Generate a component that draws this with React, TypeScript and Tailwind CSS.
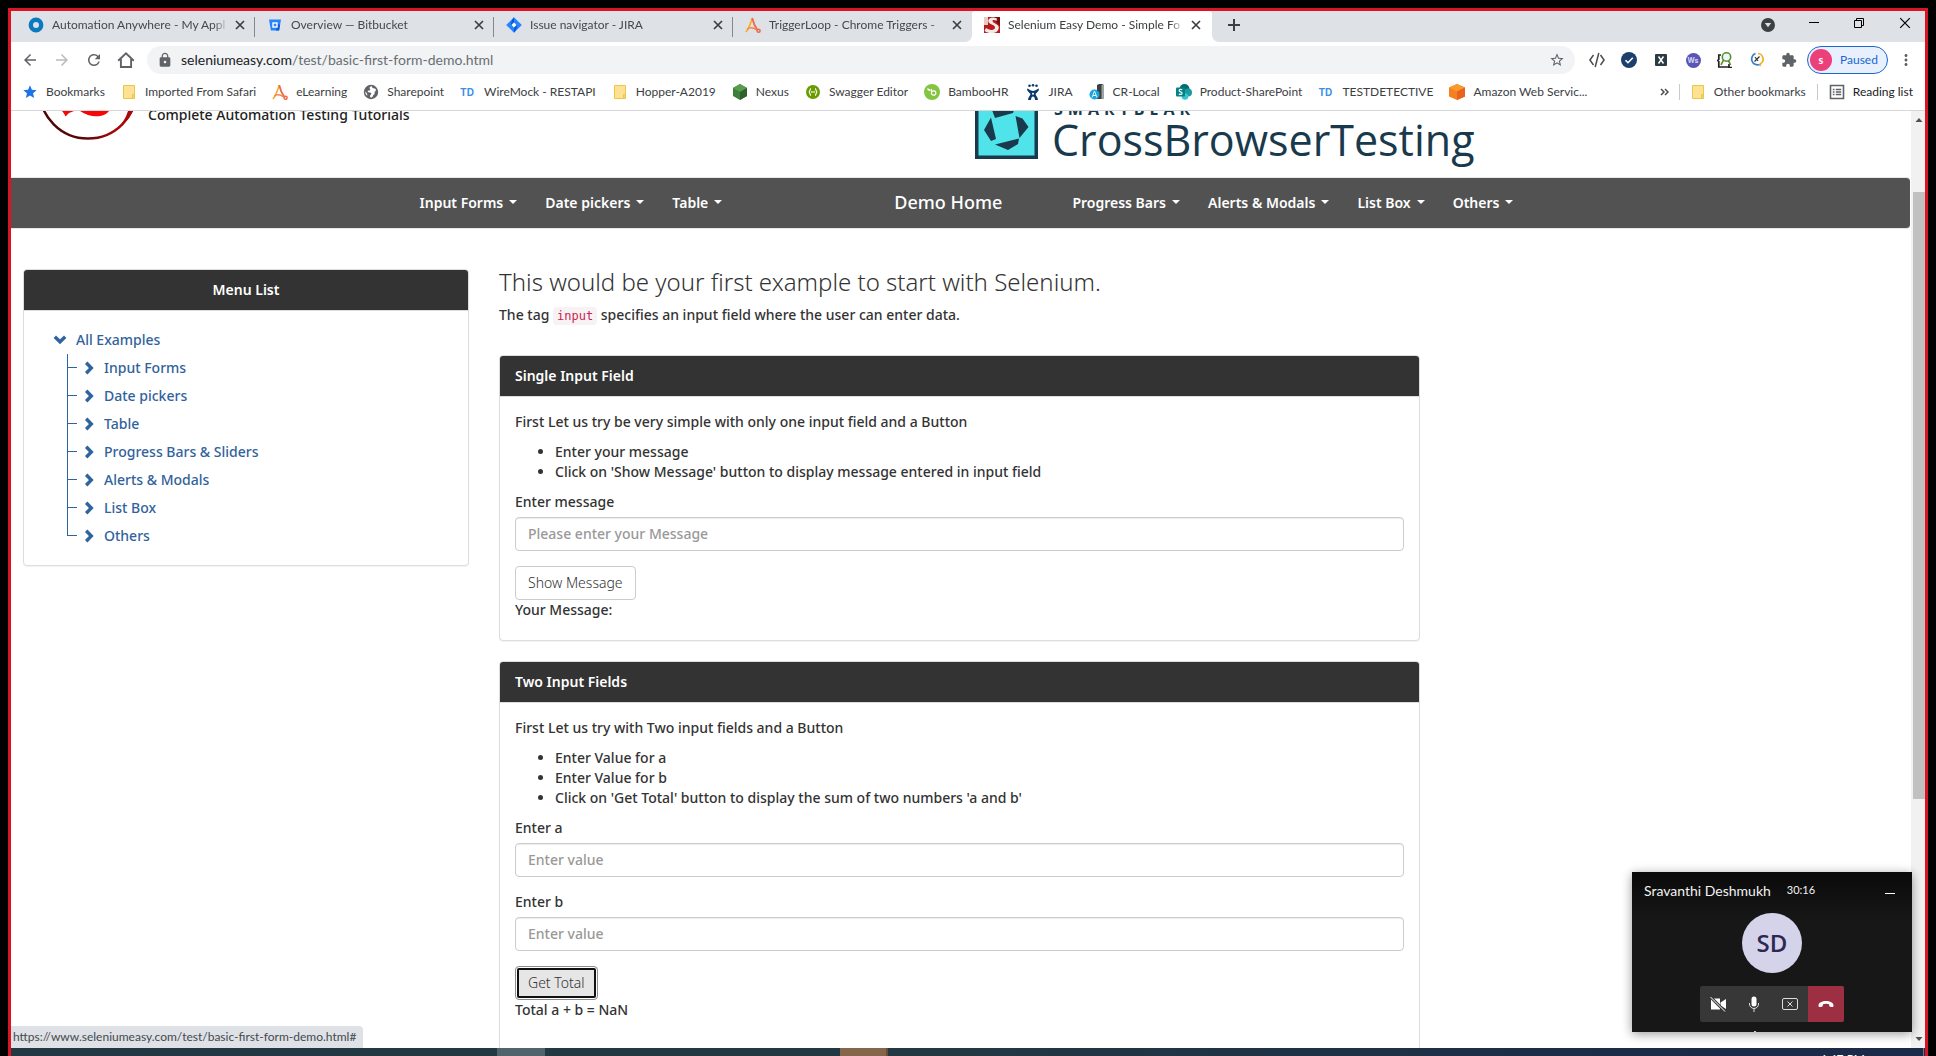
import React, { useState } from 'react';
import type { ReactNode } from 'react';
import { MdArrowBack, MdArrowForward, MdRefresh, MdLock, MdStarBorder, MdStar, MdExtension, MdMoreVert } from 'react-icons/md';

/* ---------- small drawings ---------- */

const Cross = ({ className }: { className: string }) => (
  <svg viewBox="0 0 10 10" className={className} fill="none" stroke="currentColor">
    <path d="M1 1 L9 9 M9 1 L1 9" />
  </svg>
);

const RingIcon = () => (
  <svg viewBox="0 0 16 16" className="size-4 shrink-0"><circle cx="8" cy="8" r="5.2" fill="none" stroke="#0a7ac0" strokeWidth="4.4" /></svg>
);

const BucketIcon = () => (
  <svg viewBox="0 0 16 16" className="size-4 shrink-0">
    <path d="M2 2.5h12l-1.9 11H3.9z" fill="#2684ff" />
    <path d="M9 13.5h3.1l1-6H10z" fill="#0f5fd8" />
    <rect x="6" y="6" width="4" height="4" fill="#2684ff" stroke="#fff" strokeWidth="1.4" />
  </svg>
);

const DiamondIcon = () => (
  <svg viewBox="0 0 16 16" className="size-4 shrink-0">
    <path d="M8 .2 15.8 8 8 15.8.2 8z" fill="#2684ff" />
    <path d="M8 .2v5L4.6 8.2 6 3z M8 15.8v-5l3.4-3L10 13z" fill="#0a57cf" />
    <path d="M8 5.6 10.4 8 8 10.4 5.6 8z" fill="#fff" />
  </svg>
);

const CompassAIcon = () => (
  <svg viewBox="0 0 16 16" className="size-4 shrink-0" fill="none" strokeWidth="1.5">
    <path d="M.8 15 C3.5 12.5 6 5 7.2 1.2" stroke="#f7a823" />
    <path d="M7.2 1 C8 5 11 11 12.5 13.2" stroke="#ee6a4a" strokeWidth="1.8" />
    <path d="M2 12.5 C5 9.5 8 10.5 12 13" stroke="#f4874b" />
    <circle cx="13.6" cy="13.8" r="1.5" stroke="#ee6a4a" />
  </svg>
);

const SeleniumIcon = () => (
  <svg viewBox="0 0 16 16" className="size-4 shrink-0">
    <rect width="16" height="16" fill="#b81a1a" />
    <path d="M9 0h7v9L13 6z" fill="#7c0d0d" />
    <path d="M0 0h4v8H0z" fill="#e8c9c4" />
    <path d="M13 1.5 C8 -1 3 1.5 4.5 5 C6 8 11 7.500 11 10.500 C11 13.500 6 13.800 2 11 L0.500 14 C5 17.500 14 17 14.800 11 C15 6.500 8.500 6.500 8.500 4 C8.500 2.500 11 2.800 12.500 4z" fill="#f3e9e6" />
  </svg>
);

const FolderIcon = () => (
  <svg viewBox="0 0 16 16" className="size-4 shrink-0">
    <path d="M2.500 1.500h11v13h-11z" fill="#fde293" stroke="#ecc646" />
    <path d="M11.500 10.500h1.500v4h-1.500z" fill="#fde293" stroke="#ecc646" />
  </svg>
);

const GlobeIcon = () => (
  <svg viewBox="0 0 16 16" className="size-4 shrink-0">
    <circle cx="8" cy="8" r="7.2" fill="#5f6368" />
    <path d="M9 2.300 C6.500 2.500 6 4 7 5 C8 6 6.500 6.500 5.500 6.500 C4 6.500 4.500 8.500 6.500 8.500 C9 8.500 8.500 10 7.500 11 C6.500 12 7 13.800 8.500 13.600 C10 13 9.500 11.500 11 10.500 C12.500 9.500 11 8 12 7.500 C13.500 7 13 4.500 11.500 4.500 C10 4.500 9 4 9 2.300z M2.200 7.500 C3.500 8.500 4.500 9.500 4.300 11.800 C3 10.800 2.200 9.500 2.200 7.500z" fill="#fff" />
  </svg>
);

const TdIcon = () => <span className="w-4 shrink-0 font-['Inter'] text-[10px] font-bold leading-4 text-[#3b8fe8]">TD</span>;

const HexIcon = () => (
  <svg viewBox="0 0 16 16" className="size-4 shrink-0">
    <path d="M8 0l7 4v8l-7 4-7-4V4z" fill="#3f7f3b" />
    <path d="M8 0l7 4-7 4-7-4z" fill="#5a9c4e" />
    <path d="M15 4v8l-7 4V8z" fill="#2f6130" />
  </svg>
);

const SwaggerIcon = () => (
  <svg viewBox="0 0 16 16" className="size-4 shrink-0">
    <circle cx="8" cy="8" r="7" fill="#6a9c00" />
    <path d="M6 4.500 C4.800 4.500 5.200 7.800 3.800 8 C5.200 8.200 4.800 11.500 6 11.500 M10 4.500 C11.200 4.500 10.800 7.800 12.200 8 C10.800 8.200 11.200 11.500 10 11.500" stroke="#fff" strokeWidth="1.200" fill="none" />
    <path d="M6.200 8h3.600" stroke="#fff" strokeWidth="1.400" strokeDasharray="1 .3" />
  </svg>
);

const BambooIcon = () => (
  <svg viewBox="0 0 16 16" className="size-4 shrink-0">
    <circle cx="8" cy="8" r="8" fill="#84c441" />
    <path d="M7.500 5v5.500 M7.500 8.800a2.200 2.200 0 1 1 0 .4" stroke="#fff" strokeWidth="1.200" fill="none" />
    <path d="M3 4.500c2 0 3.500 .5 3.800 2.500C4.500 7 3.300 6.300 3 4.500z" fill="#fff" />
  </svg>
);

const JiraManIcon = () => (
  <svg viewBox="0 0 16 16" className="size-4 shrink-0" fill="#0b3a6b">
    <circle cx="4.500" cy="1.800" r="1.300" /><circle cx="8" cy="1.300" r="1.300" /><circle cx="11.500" cy="1.800" r="1.300" />
    <path d="M2 4.500 C4 4.500 5 7 8 7 C11 7 12 4.500 14 4.500 C14 7.500 11.500 8.500 10.500 10 C11 12 13 13.500 13 16 H10 C10 14 9 12.500 8 12.500 C7 12.500 6 14 6 16 H3 C3 13.500 5 12 5.500 10 C4.500 8.500 2 7.500 2 4.500z" />
    <circle cx="8" cy="9.800" r="1" fill="#fff" />
  </svg>
);

const CrIcon = () => (
  <svg viewBox="0 0 16 16" className="size-4 shrink-0">
    <path d="M8 1 10 0h3l2 1v14H8z" fill="#3c4042" /><path d="M12.500 1H15v14h-2.500z" fill="#9ea3a3" />
    <circle cx="5.500" cy="10.500" r="5" fill="#1aa3dc" />
    <path d="M3 13.500 5.500 7 8 13.500 M4 11.500h3" stroke="#dff4ff" strokeWidth="1" fill="none" />
  </svg>
);

const SharePointIcon = () => (
  <svg viewBox="0 0 16 16" className="size-4 shrink-0">
    <circle cx="8.500" cy="5" r="5" fill="#036c70" /><circle cx="12" cy="8.500" r="4" fill="#1a9ba1" /><circle cx="9" cy="12.500" r="3.300" fill="#37c6d0" />
    <rect x="0" y="3.500" width="9" height="9" rx="1" fill="#038387" />
    <path d="M6.200 5.800 C4.500 5 3 5.600 3.200 6.800 C3.500 8 6.200 7.800 6.100 9.300 C6 10.700 4 10.700 2.800 10" stroke="#fff" strokeWidth="1.200" fill="none" />
  </svg>
);

const AwsIcon = () => (
  <svg viewBox="0 0 16 16" className="size-4 shrink-0">
    <path d="M8 0l8 3.500v9L8 16l-8-3.500v-9z" fill="#f58020" />
    <path d="M8 0l8 3.500L8 7.500 0 3.500z" fill="#fb9a2c" />
    <path d="M16 3.500v9L8 16V7.500z" fill="#e9611f" />
  </svg>
);

const HomeIcon = () => (
  <svg viewBox="0 0 18 18" className="size-[18px]" fill="none" stroke="#5f6368" strokeWidth="1.900">
    <path d="M1.200 9.700 9 2.200l7.800 7.500 M3.900 8v8h10.200V8" />
  </svg>
);

const Caret = () => (
  <svg viewBox="0 0 8 4" className="h-1 w-2 shrink-0"><path d="M0 0h8L4 4z" fill="#fff" /></svg>
);

const ChevronDown = () => (
  <svg viewBox="0 0 14 14" className="size-3.5 shrink-0" fill="none" stroke="#2f659d" strokeWidth="3.400"><path d="M1.800 3.800 7 8.800l5.200-5" /></svg>
);
const ChevronRight = () => (
  <svg viewBox="0 0 14 14" className="size-3.5 shrink-0" fill="none" stroke="#2f659d" strokeWidth="3.400"><path d="M4.200 1.800 9.300 7l-5.100 5.200" /></svg>
);

/* ---------- browser chrome ---------- */

const tabs: { icon: ReactNode; title: string }[] = [
  { icon: <RingIcon />, title: 'Automation Anywhere - My Appl' },
  { icon: <BucketIcon />, title: 'Overview — Bitbucket' },
  { icon: <DiamondIcon />, title: 'Issue navigator - JIRA' },
  { icon: <CompassAIcon />, title: 'TriggerLoop - Chrome Triggers -' },
];

function TabBody({ icon, title }: { icon: ReactNode; title: string }) {
  return (
    <>
      {icon}
      <span className="min-w-0 flex-1 overflow-hidden whitespace-nowrap [mask-image:linear-gradient(to_right,#000_92%,transparent)]">{title}</span>
      <button aria-label={'Close ' + title} className="-ml-1 grid size-4 place-items-center text-[#3c4043]"><Cross className="size-[10px] stroke-[1.700]" /></button>
    </>
  );
}

function TabStrip() {
  return (
    <div className="flex h-[31px] shrink-0 bg-[#dee1e6] pl-[5px] text-[12px] text-[#45494d]">
      {tabs.map((t, i) => (
        <div key={t.title} className={'flex w-[239px] shrink-0 items-center ' + (i === 3 ? 'bg-white' : '')}>
          <div className={'flex h-full min-w-0 flex-1 items-center gap-2 bg-[#dee1e6] pb-[3px] pl-3 ' + (i === 3 ? 'rounded-br-[7px] pr-[7px]' : 'pr-[6px]')}><TabBody {...t} /></div>
          {i < 3 && <div className="h-5 w-px bg-[#85888c]" />}
        </div>
      ))}
      <div className="flex w-[240px] shrink-0 rounded-t-[3px] bg-white">
        <div className="flex w-full items-center gap-2 pb-[3px] pl-3 pr-2 text-[#3c4043]"><TabBody icon={<SeleniumIcon />} title="Selenium Easy Demo - Simple Fo" /></div>
      </div>
      <div className="flex flex-1 bg-white">
        <div className="flex flex-1 rounded-bl-[7px] bg-[#dee1e6]">
          <button aria-label="New tab" className="ml-4 mb-[3px] grid w-3 place-items-center">
            <svg viewBox="0 0 12 12" className="size-3"><path d="M6 0v12M0 6h12" stroke="#3c4043" strokeWidth="2" /></svg>
          </button>
          <div className="ml-auto flex items-center gap-[34px] pb-2 pr-[14px] text-black">
            <svg viewBox="0 0 14 14" className="mt-[5px] size-3.5"><circle cx="7" cy="7" r="7" fill="#3c4043" /><path d="M3.800 5h6.400L7 9.200z" fill="#dee1e6" /></svg>
            <button aria-label="Minimize" className="h-px w-[10px] bg-black" />
            <button aria-label="Restore"><svg viewBox="0 0 12 12" className="size-3" fill="none" stroke="#000"><path d="M1.500 3.500h7v7h-7z M3.500 3.500v-2h7v7h-2" /></svg></button>
            <button aria-label="Close"><Cross className="size-3" /></button>
          </div>
        </div>
      </div>
    </div>
  );
}

function Extensions() {
  return (
    <div className="flex items-center gap-4">
      <svg viewBox="0 0 16 16" className="size-4" fill="none" stroke="#4a4d51" strokeWidth="1.500"><path d="M4.500 3 .9 8l3.600 5 M11.500 3l3.600 5-3.600 5 M9.800 1 6.200 15" /></svg>
      <svg viewBox="0 0 16 16" className="size-4"><circle cx="8" cy="8" r="8" fill="#1c3f6e" /><path d="M4.500 8.200l2.500 2.500 4.800-5" stroke="#fff" strokeWidth="1.600" fill="none" /></svg>
      <svg viewBox="0 0 16 16" className="size-4"><rect x="2" y="2" width="12" height="12" rx="1" fill="#2d3b45" /><path d="M5.500 4.500l5 7M10.500 4.500l-5 7" stroke="#fff" strokeWidth="1.500" /></svg>
      <span className="grid size-4 place-items-center"><span className="grid size-[15px] place-items-center rounded-full bg-[#5a55b5] font-['Inter'] text-[7px] font-bold leading-none text-[#d9d8f5]">Ws</span></span>
      <svg viewBox="0 0 16 16" className="size-4" fill="none"><path d="M4 3H1.800v4.500L.8 8.500l1 1V15h11M12 12v3.500h3" stroke="#222" strokeWidth="1.700" /><circle cx="9.500" cy="5" r="4.200" stroke="#5b8f2c" strokeWidth="1.600" fill="#eef6ff" /><path d="M6.500 8.200 4 12.800M11.500 8.700l2 4.300" stroke="#5b8f2c" strokeWidth="1.700" /></svg>
      <svg viewBox="0 0 16 16" className="size-4" fill="none" strokeWidth="1.700"><path d="M9 1.500a5.600 5.600 0 0 1 2.500 10.300L11 14" stroke="#f0b429" /><path d="M6.500 1.500a5.600 5.600 0 1 0 4 11" stroke="#3a7fc8" /><path d="M5.500 9.500l5-5M6 5l3 4" stroke="#333" strokeWidth="1.200" /></svg>
      <MdExtension className="size-4 text-[#5f6368]" />
    </div>
  );
}

function Toolbar() {
  return (
    <div className="flex h-9 shrink-0 items-center bg-white pl-[10px] pr-[10px]">
      <div className="flex items-center gap-[14px] text-[#5f6368]">
        <button aria-label="Back"><MdArrowBack className="size-[18px]" /></button>
        <button aria-label="Forward" className="text-[#b9bbbe]"><MdArrowForward className="size-[18px]" /></button>
        <button aria-label="Reload"><MdRefresh className="size-[18px]" /></button>
        <button aria-label="Home"><HomeIcon /></button>
      </div>
      <div className="ml-3 flex h-7 flex-1 items-center rounded-full bg-[#f1f3f4] px-[10px]">
        <MdLock className="size-4 text-[#5f6368]" />
        <a href="#" className="ml-2 flex-1 pb-[2px] text-[14px] text-[#6a6e73]"><span className="text-[#202124]">seleniumeasy.com</span>/test/basic-first-form-demo.html</a>
        <button aria-label="Bookmark this page"><MdStarBorder className="size-4 text-[#5f6368]" /></button>
      </div>
      <div className="ml-[14px]"><Extensions /></div>
      <button className="ml-[10px] flex h-7 w-[81px] shrink-0 items-center rounded-full border border-[#1967d2] bg-[#e8f0fe] pl-[2px] text-[12px] text-[#1967d2]">
        <span className="mr-2 grid size-[22px] place-items-center rounded-full bg-[#ec407a] text-[11px] font-bold text-white">s</span>
        Paused
      </button>
      <button aria-label="Menu" className="ml-[9px]"><MdMoreVert className="size-[18px] text-[#5f6368]" /></button>
    </div>
  );
}

const bookmarks: { icon: ReactNode; label: string }[] = [
  { icon: <MdStar className="size-4 shrink-0 text-[#1a73e8]" />, label: 'Bookmarks' },
  { icon: <FolderIcon />, label: 'Imported From Safari' },
  { icon: <CompassAIcon />, label: 'eLearning' },
  { icon: <GlobeIcon />, label: 'Sharepoint' },
  { icon: <TdIcon />, label: 'WireMock - RESTAPI' },
  { icon: <FolderIcon />, label: 'Hopper-A2019' },
  { icon: <HexIcon />, label: 'Nexus' },
  { icon: <SwaggerIcon />, label: 'Swagger Editor' },
  { icon: <BambooIcon />, label: 'BambooHR' },
  { icon: <JiraManIcon />, label: 'JIRA' },
  { icon: <CrIcon />, label: 'CR-Local' },
  { icon: <SharePointIcon />, label: 'Product-SharePoint' },
  { icon: <TdIcon />, label: 'TESTDETECTIVE' },
  { icon: <AwsIcon />, label: 'Amazon Web Servic...' },
];

function BookmarksBar() {
  return (
    <div className="flex h-[33px] shrink-0 items-center border-b border-[#d5d7da] bg-white pb-[5px] pl-[11px] pr-3 text-[12px] text-[#3c4043]">
      <div className="flex gap-4">
        {bookmarks.map((b) => (
          <a key={b.label} href="#" className="flex items-center gap-2 whitespace-nowrap">{b.icon}{b.label}</a>
        ))}
      </div>
      <div className="ml-auto flex items-center whitespace-nowrap">
        <button aria-label="More bookmarks"><svg viewBox="0 0 9 8" className="h-2 w-[9px]" fill="none" stroke="#4a4d51" strokeWidth="1.500"><path d="M1 1l3 3-3 3M5 1l3 3-3 3" /></svg></button>
        <div className="mx-[10px] h-4 w-px bg-[#c8cacd]" />
        <a href="#" className="flex items-center gap-2"><FolderIcon />Other bookmarks</a>
        <div className="mx-[11px] h-4 w-px bg-[#c8cacd]" />
        <button className="flex items-center gap-2 text-[#202124]">
          <svg viewBox="0 0 16 16" className="size-4" fill="none" stroke="#5f6368" strokeWidth="1.600"><path d="M1.500 1.500h13v13h-13z M3.800 5.500h1.700M6.800 5.500h5.400M3.800 8h1.700M6.800 8h5.400M3.800 10.500h1.700M6.800 10.500h5.400" /></svg>
          Reading list
        </button>
      </div>
    </div>
  );
}

/* ---------- web page ---------- */

function SiteHeader() {
  return (
    <header className="flex h-[66px] shrink-0 overflow-hidden pl-[27px]">
      <svg viewBox="38 111 100 30" className="h-[30px] w-[100px] shrink-0">
        <defs>
          <linearGradient id="ring" x1="0" x2="1"><stop offset="0" stopColor="#4a0505" /><stop offset=".45" stopColor="#5a0808" /><stop offset=".8" stopColor="#b00505" /><stop offset="1" stopColor="#8a0a0a" /></linearGradient>
        </defs>
        <circle cx="88" cy="90" r="48.500" fill="none" stroke="url(#ring)" strokeWidth="2.500" />
        <path d="M117 129 C124 124 129 119 132.500 111 L128 111 C126 118 122 124 117 129z" fill="#b00505" />
        <path d="M62 111h12l-5 2-3.500 3.500-1.500-3z M80 111h29 C104 118 90 118 80 111z" fill="#f80505" />
      </svg>
      <p className="ml-[10px] -mt-[6px] w-[827px] text-[14px] font-medium leading-5 text-[#222]">Complete Automation Testing Tutorials</p>
      <svg viewBox="0 0 63 48" className="h-12 w-[63px] shrink-0">
        <path d="M0 -10H63V48H0z" fill="#183a4c" />
        <path d="M3.500 -10H59.500V44.500H3.500z" fill="#50e3ea" />
        <path d="M17 -1 h22 l-1 3 -18 5z M40.500 5 l7 2.500 6 8.500 -9 11z M16 6.500 l5 21.500 -5 2 -7-11z M20 33.500 l24-6 -1 5.500 -10 6z" fill="#183a4c" />
      </svg>
      <div className="ml-[14px] -mt-3 flex flex-col font-['Open_Sans'] text-[#183a4c]">
        <span className="pl-[2px] text-[16px] font-bold leading-5 tracking-[5px]">SMARTBEAR</span>
        <span className="-mt-[7px] text-[43px] leading-[56px]">CrossBrowserTesting</span>
      </div>
    </header>
  );
}

const NavLink = ({ label }: { label: string }) => (
  <a href="#" className="flex items-center gap-[6px] px-[14px]">{label}<Caret /></a>
);

function NavBar() {
  return (
    <nav className="mr-px flex h-[52px] shrink-0 items-center justify-center whitespace-nowrap rounded-r-[4px] border-y border-[#e7e7e7] bg-[#525252] pb-[2px] pl-3 text-[14px] font-semibold text-white">
      <div className="flex">
        {['Input Forms', 'Date pickers', 'Table'].map((l) => <NavLink key={l} label={l} />)}
      </div>
      <a href="#" className="ml-[158px] mr-14 text-[18px] font-medium">Demo Home</a>
      <div className="flex">
        {['Progress Bars', 'Alerts & Modals', 'List Box', 'Others'].map((l) => <NavLink key={l} label={l} />)}
      </div>
    </nav>
  );
}

function Panel({ title, center, children }: { title: string; center?: boolean; children: ReactNode }) {
  return (
    <section className="mb-5 rounded-[4px] border border-[#ddd] bg-white shadow-[0_1px_1px_rgba(0,0,0,0.05)]">
      <h2 className={'rounded-t-[3px] border-b border-[#ddd] bg-[#333] px-[15px] py-[10px] font-semibold text-white ' + (center ? 'text-center' : '')}>{title}</h2>
      {children}
    </section>
  );
}

const examples = ['Input Forms', 'Date pickers', 'Table', 'Progress Bars & Sliders', 'Alerts & Modals', 'List Box', 'Others'];

function MenuTree() {
  return (
    <div className="px-[29px] pt-[15px] pb-[15px] text-[#31629c]">
      <a href="#" className="flex h-7 items-center gap-[9px]"><ChevronDown />All Examples</a>
      <ul className="ml-[14px]">
        {examples.map((e, i) => (
          <li key={e} className="flex h-7">
            <div className="flex w-[10px] flex-col">
              <div className="h-3.5 border-b border-l border-[#2f659d]" />
              {i < examples.length - 1 && <div className="h-3.5 border-l border-[#2f659d]" />}
            </div>
            <a href="#" className="ml-[5px] flex items-center gap-2"><ChevronRight />{e}</a>
          </li>
        ))}
      </ul>
    </div>
  );
}

function Field({ id, label, placeholder }: { id: string; label: string; placeholder: string }) {
  const [value, setValue] = useState('');
  return (
    <div className="mb-[15px]">
      <label htmlFor={id} className="mb-[5px] block">{label}</label>
      <input id={id} value={value} onChange={(e) => setValue(e.target.value)} placeholder={placeholder}
        className="block h-[34px] w-full rounded-[4px] border border-[#ccc] bg-white px-3 pb-[2px] shadow-[inset_0_1px_1px_rgba(0,0,0,0.075)] placeholder:text-[#999]" />
    </div>
  );
}

function Content() {
  return (
    <main className="text-[14px] font-medium leading-5 text-[#333]">
      <h1 className="mb-[10px] text-[24px] font-light leading-[26px]">This would be your first example to start with Selenium.</h1>
      <p className="mb-[30px]">The tag <code className="rounded-[4px] bg-[#f9f2f4] px-1 py-[2px] font-['DejaVu_Sans_Mono',monospace] text-[12px] leading-none text-[#c7254e]">input</code> specifies an input field where the user can enter data.</p>
      <Panel title="Single Input Field">
        <div className="px-[15px] pb-5 pt-[15px]">
          <p className="mb-[10px]">First Let us try be very simple with only one input field and a Button</p>
          <ul className="mb-[10px] list-disc pl-10">
            <li>Enter your message</li>
            <li>Click on 'Show Message' button to display message entered in input field</li>
          </ul>
          <Field id="message" label="Enter message" placeholder="Please enter your Message" />
          <button className="block h-[34px] rounded-[4px] border border-[#ccc] bg-white px-3 font-light">Show Message</button>
          <p>Your Message:</p>
        </div>
      </Panel>
      <Panel title="Two Input Fields">
        <div className="px-[15px] pb-10 pt-[15px]">
          <p className="mb-[10px]">First Let us try with Two input fields and a Button</p>
          <ul className="mb-[10px] list-disc pl-10">
            <li>Enter Value for a</li>
            <li>Enter Value for b</li>
            <li>Click on 'Get Total' button to display the sum of two numbers 'a and b'</li>
          </ul>
          <Field id="value-a" label="Enter a" placeholder="Enter value" />
          <Field id="value-b" label="Enter b" placeholder="Enter value" />
          <button className="block h-[34px] rounded-[4px] border border-[#8c8c8c] bg-[#e6e6e6] px-3 font-light shadow-[inset_0_0_0_1px_#fff] outline-2 -outline-offset-4 outline-[#101010]">Get Total</button>
          <p>Total a + b = NaN</p>
        </div>
      </Panel>
    </main>
  );
}

function ScrollBar() {
  return (
    <div className="flex w-3.5 shrink-0 flex-col items-end bg-[#f1f1f1]">
      <svg viewBox="0 0 12 18" className="h-[18px] w-3"><path d="M2.500 11h7L6 7z" fill="#505050" /></svg>
      <div className="flex w-3 flex-1 flex-col">
        <div className="flex-[63]" />
        <div className="flex-[607] bg-[#c1c1c1]" />
        <div className="flex-[231]" />
      </div>
      <svg viewBox="0 0 12 18" className="h-[18px] w-3"><path d="M2.500 7h7L6 11z" fill="#505050" /></svg>
    </div>
  );
}

function CallWindow() {
  return (
    <aside className="absolute bottom-4 right-[13px] h-40 w-[280px] overflow-hidden bg-linear-to-b from-[#0a0a0a] to-[#171717] to-30% font-['Lato'] text-[#f2f2f2] shadow-[0_2px_10px_rgba(0,0,0,0.4)]">
      <div className="flex h-[37px] items-center pl-3 pr-[17px]">
        <span className="text-[14px]">Sravanthi Deshmukh</span>
        <span className="ml-4 text-[11px]">30:16</span>
        <button aria-label="Minimize call" className="ml-auto mt-[6px] h-px w-[10px] bg-white" />
      </div>
      <div className="mx-auto mt-1 grid size-[60px] place-items-center rounded-full bg-[#d5d3e9] font-['Open_Sans'] text-[24px] font-semibold text-[#2c2753]">SD</div>
      <div className="mx-auto mt-[13px] flex h-9 w-36 overflow-hidden rounded-[2px] bg-[#373737]">
        <button aria-label="Turn camera on" className="grid flex-1 place-items-center">
          <svg viewBox="0 0 16 16" className="size-4"><path d="M1 2.500h9v11H1z M10.500 6.500 16 3v10l-5.500-3.500z" fill="#fff" /><path d="M.5 1 15 15.500" stroke="#373737" strokeWidth="3" /><path d="M.5 1 15 15.500" stroke="#fff" /></svg>
        </button>
        <button aria-label="Mute" className="grid flex-1 place-items-center">
          <svg viewBox="0 0 16 16" className="size-4"><rect x="5.500" y=".5" width="5" height="10" rx="2.500" fill="#fff" /><path d="M3.500 7v1a4.500 4.500 0 0 0 9 0V7M8 12.500V16" stroke="#ddd" fill="none" /></svg>
        </button>
        <button aria-label="Stop sharing" className="grid flex-1 place-items-center">
          <svg viewBox="0 0 16 16" className="size-4" fill="none" stroke="#ddd"><rect x=".5" y="2.500" width="15" height="11" rx="1.500" /><path d="M5.500 5.500l5 5M10.500 5.500l-5 5" /></svg>
        </button>
        <button aria-label="Hang up" className="grid flex-1 place-items-center bg-[#9c2f41]">
          <svg viewBox="0 0 16 16" className="size-4"><path d="M.5 9.500 C.5 3.500 15.500 3.500 15.500 9.500 C15.500 11.500 14.500 11.300 11.500 10.500 L11 8.300 C9.500 7.600 6.500 7.600 5 8.300 L4.500 10.500 C1.500 11.300 .5 11.500 .5 9.500z" fill="#fff" /></svg>
        </button>
      </div>
      <div className="ml-[122px] mt-[9px] h-px w-[2px] bg-[#ccc]" />
    </aside>
  );
}

export default function App() {
  return (
    <div className="h-screen overflow-hidden bg-black px-2 pt-2 font-['Lato',sans-serif]">
      <div className="flex h-full flex-col border-x-3 border-t-3 border-[#d91424]">
        <TabStrip />
        <Toolbar />
        <BookmarksBar />
        <div className="relative flex min-h-0 flex-1 bg-white">
          <div className="flex min-w-0 flex-1 flex-col overflow-hidden font-['Noto_Sans',sans-serif]">
            <SiteHeader />
            <NavBar />
            <div className="mt-10 flex">
              <div className="w-1/4 pl-3 pr-[17px] text-[14px] font-medium leading-5"><Panel title="Menu List" center><MenuTree /></Panel></div>
              <div className="w-1/2 pl-[13px] pr-4"><Content /></div>
            </div>
          </div>
          <ScrollBar />
          <div className="absolute bottom-0 left-0 flex h-[22px] items-center rounded-tr-[4px] bg-[#dee1e6] pl-[2px] pr-[7px] text-[12px] text-[#45494d]">https://www.seleniumeasy.com/test/basic-first-form-demo.html#</div>
          <CallWindow />
        </div>
        <footer className="flex h-2 shrink-0 overflow-hidden bg-linear-to-r from-[#223843] from-50% to-[#1a2a48] to-90%">
          <div className="ml-[486px] w-12 bg-[#51646b]" />
          <div className="ml-[295px] w-12 border-r-2 border-[#6b4d33] bg-[#86664a]" />
          <time className="ml-auto mt-[3px] text-[12px] leading-4 text-white">4:47 PM</time>
          <div className="ml-[58px] mr-[1px] w-px bg-[#6b7891]" />
        </footer>
      </div>
    </div>
  );
}
